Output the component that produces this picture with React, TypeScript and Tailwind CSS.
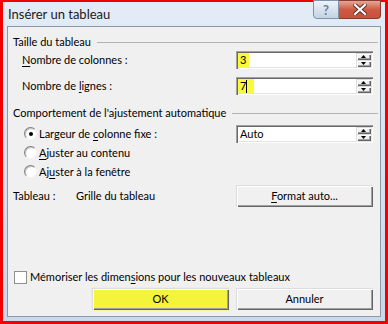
import type { ReactNode } from "react";

const raised =
  "shadow-[inset_1px_1px_0_#dcdcdc,inset_2px_2px_0_#ffffff,inset_-1px_-1px_0_#646464,inset_-2px_-2px_0_#a0a0a0]";

function Arrow({ up }: { up?: boolean }) {
  return (
    <div className={`flex-1 flex items-center justify-center bg-[#f0f0f0] ${raised}`}>
      <svg width="5" height="3" viewBox="0 0 5 3">
        {up ? (
          <path d="M0 3 L2.5 0 L5 3 Z" fill="#000" />
        ) : (
          <path d="M0 0 L2.5 3 L5 0 Z" fill="#000" />
        )}
      </svg>
    </div>
  );
}

function Spin({ children }: { children: ReactNode }) {
  return (
    <div className="w-[137px] h-[18px] bg-white flex p-[2px] shadow-[inset_1px_1px_0_#a0a0a0,inset_2px_2px_0_#696969,inset_-1px_-1px_0_#ffffff,inset_-2px_-2px_0_#e3e3e3]">
      <div className="flex-1 flex items-stretch">{children}</div>
      <div className="w-[15px] flex flex-col">
        <Arrow up />
        <Arrow />
      </div>
    </div>
  );
}

function Btn({ children, yellow }: { children: ReactNode; yellow?: boolean }) {
  return (
    <div
      className={`w-[137px] h-[22px] flex items-center justify-center ${raised} ${
        yellow ? "bg-[#f4f43a] ring-1 ring-[#f7f77a]/70" : "bg-[#f0f0f0]"
      }`}
    >
      {children}
    </div>
  );
}

function Radio({ on }: { on?: boolean }) {
  return (
    <span className="w-[13px] h-[13px] rounded-full bg-white border border-t-[#808080] border-l-[#808080] border-r-[#f4f4f4] border-b-[#f4f4f4] shadow-[inset_1px_1px_0_#c4c4c4] flex items-center justify-center mr-[2px]">
      {on && <span className="w-[4px] h-[4px] rounded-full bg-black" />}
    </span>
  );
}

function GroupLabel({ children }: { children: ReactNode }) {
  return (
    <div className="flex items-center h-[14px] pl-[5px] pr-[2px]">
      <span>{children}</span>
      <span className="flex-1 h-px bg-[#b4b4b4] ml-[6px]" />
    </div>
  );
}

const U = ({ children }: { children: ReactNode }) => (
  <span className="underline underline-offset-[2px] decoration-1">{children}</span>
);

export default function App() {
  return (
    <div className="w-[388px] h-[324px] bg-[#f20000] pt-[2px] px-[3px] pb-[3px] font-['Lato',sans-serif] text-[11px] text-black leading-[14px]">
      <div className="h-full flex flex-col px-[4px] pb-[4px] bg-gradient-to-b from-[#e3ecf6] via-[#d6e3f1] to-[#c8d9ec]">
        <div className="h-[24px] flex items-start justify-between">
          <span className="pl-[1px] pt-[5px] text-[13px] text-[#1a1a1a]">Insérer un tableau</span>
          <div className="flex -mt-[2px]">
            <div className="w-[26px] h-[19px] rounded-bl-[4px] border border-[#7f92a8] bg-gradient-to-b from-[#eef3f9] to-[#c4d3e4] flex items-center justify-center text-[13px] font-bold text-[#6a7f99]">
              ?
            </div>
            <div className="w-[42px] h-[19px] rounded-br-[4px] border border-l-0 border-[#8a3b30] bg-gradient-to-b from-[#e4a899] via-[#cf5a45] to-[#c9503a] flex items-center justify-center">
              <svg width="14" height="11" viewBox="0 0 14 11">
                <path
                  d="M2 1 L12 10 M12 1 L2 10"
                  stroke="#5a2a22"
                  strokeWidth="4"
                  strokeLinecap="square"
                />
                <path
                  d="M2 1 L12 10 M12 1 L2 10"
                  stroke="#ffffff"
                  strokeWidth="2.2"
                  strokeLinecap="square"
                />
              </svg>
            </div>
          </div>
        </div>

        <div className="flex-1 border border-[#8c9aa8] bg-[#f0f0f0] flex flex-col">
          <div className="mt-[8px]">
            <GroupLabel>Taille du tableau</GroupLabel>
          </div>
          <div className="flex items-center h-[18px] mt-[2px] pl-[14px] pr-[7px]">
            <span className="flex-1">
              <U>N</U>ombre de colonnes :
            </span>
            <Spin>
              <span className="bg-[#fafa3c] w-[11px] pl-[2px] flex items-center">3</span>
            </Spin>
          </div>
          <div className="flex items-center h-[18px] mt-[8px] pl-[14px] pr-[7px]">
            <span className="flex-1">
              Nombre de <U>l</U>ignes :
            </span>
            <Spin>
              <span className="bg-[#fafa3c] w-[16px] pl-[2px] flex items-center">
                7<span className="w-px h-[13px] bg-black" />
              </span>
            </Spin>
          </div>

          <div className="mt-[11px]">
            <GroupLabel>Comportement de l'ajustement automatique</GroupLabel>
          </div>
          <div className="flex items-center h-[19px] mt-[4px] pl-[16px] pr-[7px]">
            <Radio on />
            <span className="flex-1">
              Largeur de <U>c</U>olonne fixe :
            </span>
            <Spin>
              <span className="pl-[2px] flex items-center">Auto</span>
            </Spin>
          </div>
          <div className="flex items-center h-[19px] pl-[16px]">
            <Radio />
            <span>
              <U>A</U>juster au contenu
            </span>
          </div>
          <div className="flex items-center h-[19px] pl-[16px]">
            <Radio />
            <span>
              Aj<U>u</U>ster à la fenêtre
            </span>
          </div>

          <div className="flex items-center h-[22px] mt-[4px] pl-[5px] pr-[7px]">
            <span className="w-[63px]">Tableau :</span>
            <span className="flex-1">Grille du tableau</span>
            <Btn>
              <span>
                <U>F</U>ormat auto...
              </span>
            </Btn>
          </div>

          <div className="flex-1" />

          <div className="flex items-center h-[14px] mb-[4px] pl-[6px]">
            <span className="w-[13px] h-[13px] bg-white border border-[#8e8f8f] mr-[3px]" />
            <span>
              Mémoriser les dimen<U>s</U>ions pour les nouveaux tableaux
            </span>
          </div>
          <div className="flex justify-end gap-[7px] pr-[7px] mb-[6px]">
            <Btn yellow>OK</Btn>
            <Btn>Annuler</Btn>
          </div>
        </div>
      </div>
    </div>
  );
}
